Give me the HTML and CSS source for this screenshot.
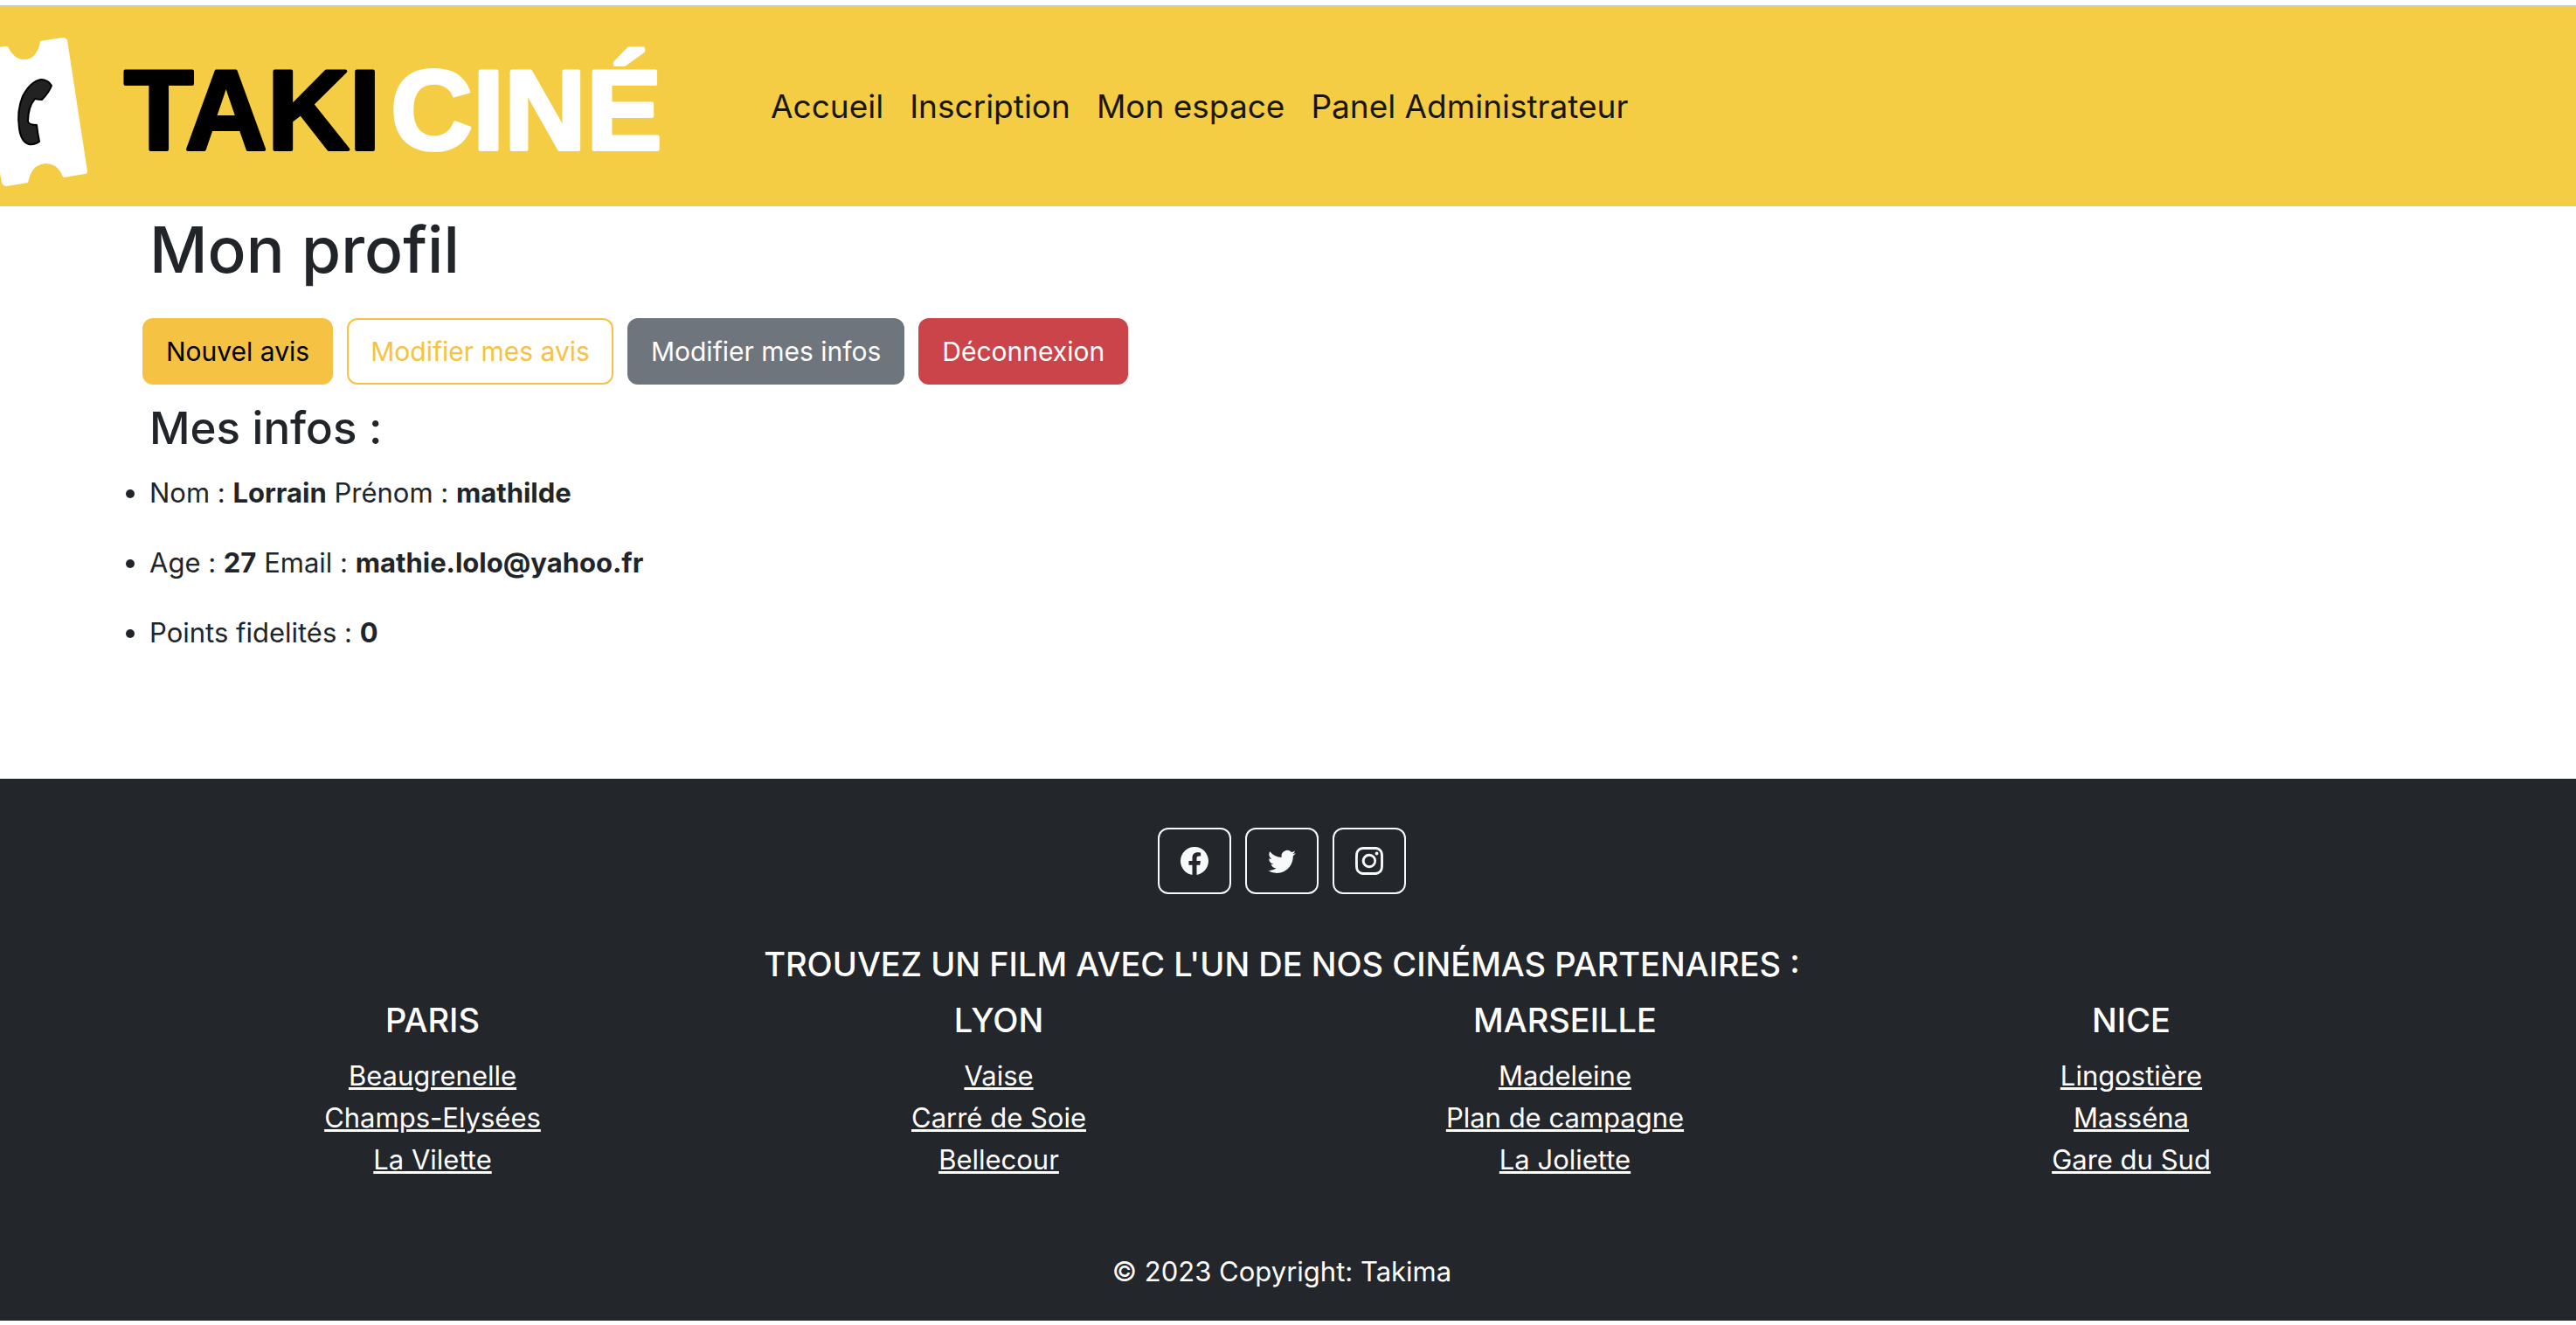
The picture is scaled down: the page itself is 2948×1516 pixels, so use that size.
FILE: index.html
```html
<!DOCTYPE html>
<html lang="fr">
<head>
<meta charset="utf-8">
<meta name="viewport" content="width=device-width, initial-scale=1">
<title>TakiCiné - Mon profil</title>
<link rel="stylesheet" href="styles.css">
</head>
<body>
<header class="navbar">
  <a class="brand" href="#" aria-label="TakiCiné">
    <svg class="logo" viewBox="0 8 770 228" aria-hidden="true">
      <path fill="#fff" d="M-4 54L8 53Q10 54 11 57Q17 67 25 68Q36 69 41 61Q45 55 46 47L71 43Q76 43 77 46L100 196Q100 199 97 199L73 203Q71 202 70 198Q64 187 52 187Q40 188 35 199Q33 204 32 209L8 213Q3 213 2 209L-4 175Z"/>
      <path fill="#222" stroke="#000" stroke-width="2" stroke-linejoin="round" d="M47 91Q55 91 59 98Q56 106 48 114Q44 114 40 113Q32 122 32 139Q33 143 42 143Q43 152 45 162Q40 166 33 165Q24 162 22 147Q19 127 26 110Q35 93 47 91Z"/>
      <text class="logo-text" y="171"><tspan class="logo-taki" x="142">TAKI</tspan><tspan class="logo-cine" x="447">CINÉ</tspan></text>
    </svg>
  </a>
  <nav class="nav">
    <a href="#">Accueil</a>
    <a href="#">Inscription</a>
    <a href="#">Mon espace</a>
    <a href="#">Panel Administrateur</a>
  </nav>
</header>

<main class="profile">
  <h1>Mon profil</h1>
  <div class="actions">
    <button type="button" class="btn btn-warning">Nouvel avis</button>
    <button type="button" class="btn btn-outline">Modifier mes avis</button>
    <button type="button" class="btn btn-secondary">Modifier mes infos</button>
    <button type="button" class="btn btn-danger">Déconnexion</button>
  </div>
  <h2>Mes infos :</h2>
  <ul class="infos">
    <li>Nom : <strong>Lorrain</strong> Prénom : <strong>mathilde</strong></li>
    <li>Age : <strong>27</strong> Email : <strong>mathie.lolo@yahoo.fr</strong></li>
    <li>Points fidelités : <strong>0</strong></li>
  </ul>
</main>

<footer class="footer">
  <div class="social">
    <a class="social-link" href="#" aria-label="Facebook"><svg viewBox="0 0 16 16"><path d="M16 8.049c0-4.446-3.582-8.05-8-8.05C3.58 0-.002 3.603-.002 8.05c0 4.017 2.926 7.347 6.75 7.951v-5.625h-2.03V8.05H6.75V6.275c0-2.017 1.195-3.131 3.022-3.131.876 0 1.791.157 1.791.157v1.98h-1.009c-.993 0-1.303.621-1.303 1.258v1.51h2.218l-.354 2.326H9.25V16c3.824-.604 6.75-3.934 6.75-7.951z"/></svg></a>
    <a class="social-link" href="#" aria-label="Twitter"><svg viewBox="0 0 16 16"><path d="M5.026 15c6.038 0 9.341-5.003 9.341-9.334 0-.14 0-.282-.006-.422A6.685 6.685 0 0 0 16 3.542a6.658 6.658 0 0 1-1.889.518 3.301 3.301 0 0 0 1.447-1.817 6.533 6.533 0 0 1-2.087.793A3.286 3.286 0 0 0 7.875 6.03a9.325 9.325 0 0 1-6.767-3.429 3.289 3.289 0 0 0 1.018 4.382A3.323 3.323 0 0 1 .64 6.575v.045a3.288 3.288 0 0 0 2.632 3.218 3.203 3.203 0 0 1-.865.115 3.23 3.23 0 0 1-.614-.057 3.283 3.283 0 0 0 3.067 2.277A6.588 6.588 0 0 1 .78 13.58a6.32 6.32 0 0 1-.78-.045A9.344 9.344 0 0 0 5.026 15z"/></svg></a>
    <a class="social-link" href="#" aria-label="Instagram"><svg viewBox="0 0 16 16"><path d="M8 0C5.829 0 5.556.01 4.703.048 3.85.088 3.269.222 2.76.42a3.917 3.917 0 0 0-1.417.923A3.927 3.927 0 0 0 .42 2.76C.222 3.268.087 3.85.048 4.7.01 5.555 0 5.827 0 8.001c0 2.172.01 2.444.048 3.297.04.852.174 1.433.372 1.942.205.526.478.972.923 1.417.444.445.89.719 1.416.923.51.198 1.09.333 1.942.372C5.555 15.99 5.827 16 8 16s2.444-.01 3.298-.048c.851-.04 1.434-.174 1.943-.372a3.916 3.916 0 0 0 1.416-.923c.445-.445.718-.891.923-1.417.197-.509.332-1.09.372-1.942C15.99 10.445 16 10.173 16 8s-.01-2.445-.048-3.299c-.04-.851-.175-1.433-.372-1.941a3.926 3.926 0 0 0-.923-1.417A3.911 3.911 0 0 0 13.24.42c-.51-.198-1.092-.333-1.943-.372C10.443.01 10.172 0 7.998 0h.003zm-.717 1.442h.718c2.136 0 2.389.007 3.232.046.78.035 1.204.166 1.486.275.373.145.64.319.92.599.28.28.453.546.598.92.11.281.24.705.275 1.485.039.843.047 1.096.047 3.231s-.008 2.389-.047 3.232c-.035.78-.166 1.203-.275 1.485a2.47 2.47 0 0 1-.599.919c-.28.28-.546.453-.92.598-.28.11-.704.24-1.485.276-.843.038-1.096.047-3.232.047s-2.39-.009-3.233-.047c-.78-.036-1.203-.166-1.485-.276a2.478 2.478 0 0 1-.92-.598 2.48 2.48 0 0 1-.6-.92c-.109-.281-.24-.705-.275-1.485-.038-.843-.046-1.096-.046-3.233 0-2.136.008-2.388.046-3.231.036-.78.166-1.204.276-1.486.145-.373.319-.64.599-.92.28-.28.546-.453.92-.598.282-.11.705-.24 1.485-.276.738-.034 1.024-.044 2.515-.045v.002zm4.988 1.328a.96.96 0 1 0 0 1.92.96.96 0 0 0 0-1.92zm-4.27 1.122a4.109 4.109 0 1 0 0 8.217 4.109 4.109 0 0 0 0-8.217zm0 1.441a2.667 2.667 0 1 1 0 5.334 2.667 2.667 0 0 1 0-5.334z"/></svg></a>
  </div>
  <h5>TROUVEZ UN FILM AVEC L'UN DE NOS CINÉMAS PARTENAIRES :</h5>
  <div class="cities">
    <section>
      <h5>PARIS</h5>
      <ul>
        <li><a href="#">Beaugrenelle</a></li>
        <li><a href="#">Champs-Elysées</a></li>
        <li><a href="#">La Vilette</a></li>
      </ul>
    </section>
    <section>
      <h5>LYON</h5>
      <ul>
        <li><a href="#">Vaise</a></li>
        <li><a href="#">Carré de Soie</a></li>
        <li><a href="#">Bellecour</a></li>
      </ul>
    </section>
    <section>
      <h5>MARSEILLE</h5>
      <ul>
        <li><a href="#">Madeleine</a></li>
        <li><a href="#">Plan de campagne</a></li>
        <li><a href="#">La Joliette</a></li>
      </ul>
    </section>
    <section>
      <h5>NICE</h5>
      <ul>
        <li><a href="#">Lingostière</a></li>
        <li><a href="#">Masséna</a></li>
        <li><a href="#">Gare du Sud</a></li>
      </ul>
    </section>
  </div>
  <p class="copyright">© 2023 Copyright: Takima</p>
</footer>
</body>
</html>
```
FILE: styles.css
```css
* {
  box-sizing: border-box;
}

body {
  margin: 0;
  padding-top: 6px;
  background: #fff;
  color: #212529;
  font-family: Inter, "Liberation Sans", sans-serif;
  font-size: 31px;
  line-height: 48px;
}

h1, h2, h5, p, ul {
  margin: 0;
  padding: 0;
}

h1, h2, h5 {
  font-weight: 500;
}

/* Header */
.navbar {
  display: flex;
  flex-wrap: wrap;
  align-items: center;
  gap: 112px;
  border-top: 2px solid #c9cccb;
  background: #f5cd45;
}

.brand,
.logo {
  display: block;
}

.logo {
  width: 770px;
  height: 228px;
}

.logo-text {
  font-family: "Liberation Sans", sans-serif;
  font-size: 130px;
  font-weight: 700;
  stroke-width: 4px;
  stroke-linejoin: round;
}

.logo-taki {
  fill: #000;
  stroke: #000;
}

.logo-cine {
  fill: #fff;
  stroke: #fff;
}

.nav {
  display: flex;
  flex-wrap: wrap;
  gap: 30px;
  font-size: 37px;
}

.nav a {
  color: #19170c;
  text-decoration: none;
}

/* Profile */
.profile {
  padding: 2px 171px 111px;
}

h1 {
  margin-bottom: 30px;
  font-size: 73px;
  line-height: 96px;
}

h2 {
  margin-bottom: 16px;
  font-size: 51px;
  line-height: 68px;
}

.actions {
  display: flex;
  flex-wrap: wrap;
  gap: 16px;
  margin: 0 -8px 16px;
}

.btn {
  padding: 12px 25px;
  border: 2px solid;
  border-radius: 12px;
  font: inherit;
  font-size: 30px;
  color: #fff;
}

.btn-warning {
  border-color: #f5c244;
  background: #f5c244;
  color: #000;
}

.btn-outline {
  border-color: #f5c244;
  background: #fff;
  color: #f5c244;
}

.btn-secondary {
  border-color: #6e757c;
  background: #6e757c;
}

.btn-danger {
  border-color: #ca444a;
  background: #ca444a;
}

.infos li {
  margin-bottom: 32px;
}

/* Footer */
.footer {
  display: flex;
  flex-direction: column;
  align-items: center;
  padding: 56px 14px 32px 0;
  background: #23262b;
  color: #fff;
  text-align: center;
}

.social {
  display: flex;
  gap: 16px;
  margin-bottom: 56px;
}

.social-link {
  display: flex;
  align-items: center;
  justify-content: center;
  width: 84px;
  height: 76px;
  border: 2px solid #f8f9fa;
  border-radius: 12px;
}

.social-link svg {
  width: 32px;
  height: 32px;
  fill: #f8f9fa;
}

h5 {
  margin-bottom: 16px;
  font-size: 38px;
}

.cities {
  display: grid;
  grid-template-columns: repeat(4, 1fr);
  width: 100%;
  max-width: 2592px;
}

.cities ul {
  list-style: none;
}

.cities a {
  color: #fff;
}

.copyright {
  padding-top: 80px;
}
```
